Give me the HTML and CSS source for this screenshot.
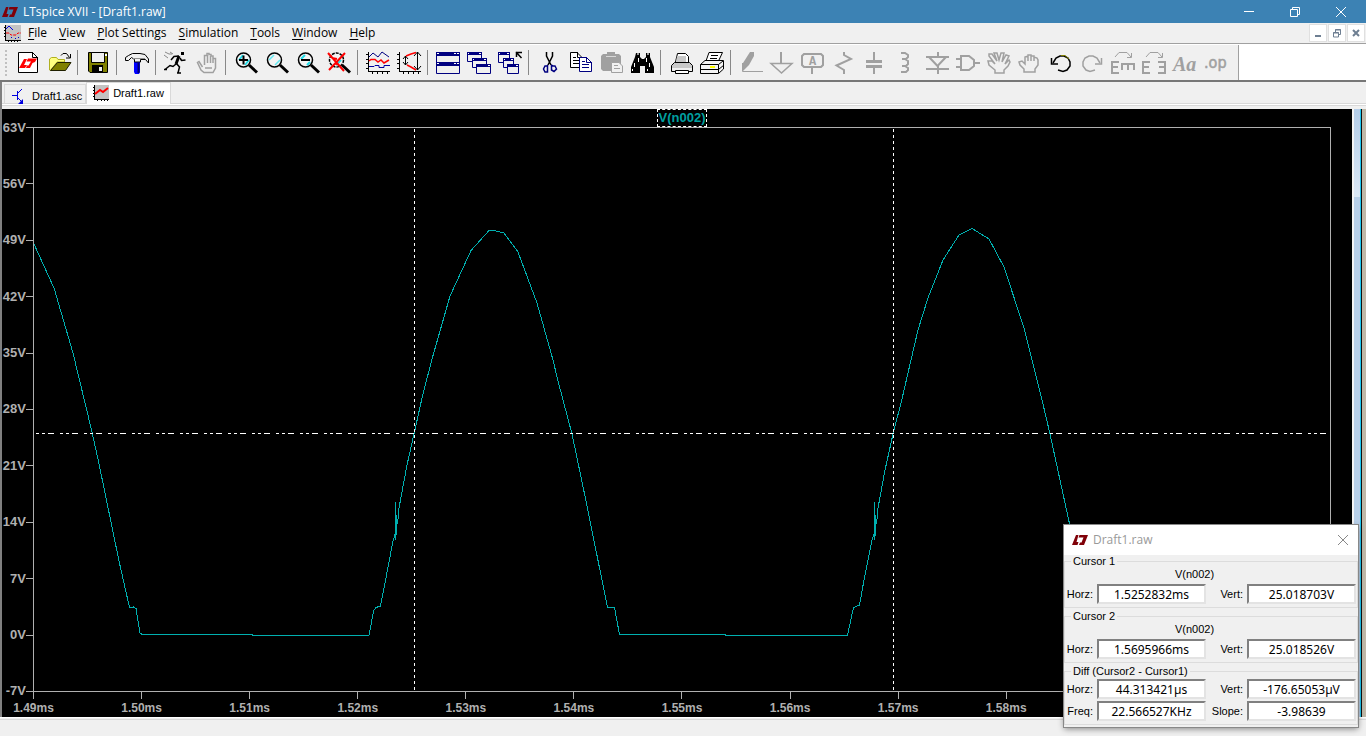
FILE: index.html
```html
<!DOCTYPE html>
<html lang="en">
<head>
<meta charset="utf-8">
<title>LTspice XVII - [Draft1.raw]</title>
<link rel="stylesheet" href="styles.css">
</head>
<body>
<header class="titlebar">
  <svg class="logo" viewBox="0 0 16 12"><path d="M4 1H6.500L4.500 8H6.500L5.500 11H0Z M7.500 1H16L15 3.500L12 11H7L8 8.500H9.500L11.500 3.500H6.500Z" fill="#800008"/></svg>
  <h1 class="title">LTspice XVII - [Draft1.raw]</h1>
  <div class="winbtns">
    <button aria-label="Minimize"><svg viewBox="0 0 12 12"><path d="M1 5.500H11"/></svg></button>
    <button aria-label="Restore"><svg viewBox="0 0 12 12"><path d="M1.500 3.500H8.500V10.500H1.500ZM3.500 3V1.500H10.500V8.500H9"/></svg></button>
    <button aria-label="Close"><svg viewBox="0 0 12 12"><path d="M1 1L11 11M11 1L1 11"/></svg></button>
  </div>
</header>

<nav class="menubar">
  <svg class="docicon" viewBox="0 0 17 17"><path d="M2 0H17V15H2Z" fill="#c3c3c3"/><path d="M1.500 0V16M1 15.500H17M0 2.500H2M0 5.500H2M0 8.500H2M0 11.500H2M4.500 15V17M7.500 15V17M10.500 15V17M13.500 15V17" stroke="#000" fill="none"/><path d="M2 4L5 1L9 5" stroke="#0000e0" fill="none"/><path d="M2 8H5L7 10H12L14 8H17" stroke="#f00" fill="none" stroke-dasharray="3 1"/><path d="M7 12h1v1h-1zM11 13h1v1h-1zM14 12h1v1h-1z" fill="#00c"/></svg>
  <button><u>F</u>ile</button>
  <button><u>V</u>iew</button>
  <button><u>P</u>lot Settings</button>
  <button><u>S</u>imulation</button>
  <button><u>T</u>ools</button>
  <button><u>W</u>indow</button>
  <button><u>H</u>elp</button>
  <div class="mdibtns">
    <button aria-label="Minimize document"><svg viewBox="0 0 12 12"><path d="M3 9H9" stroke-width="2"/></svg></button>
    <button aria-label="Restore document"><svg viewBox="0 0 12 12"><path d="M2.500 5.500H7.500V10H2.500ZM2 6H8M4.500 5V2.500H9.500V7.500H8M4 3H10"/></svg></button>
    <button aria-label="Close document"><svg viewBox="0 0 12 12"><path d="M3 3L9 9M9 3L3 9" stroke-width="2"/></svg></button>
  </div>
</nav>

<div class="toolrow">
<div class="toolbar" role="toolbar" aria-label="Main">
  <button aria-label="New schematic"><svg viewBox="0 0 24 24"><path d="M2.500 1.500H16.500L21.500 6.500V21.500H2.500Z" fill="#fff" stroke="#000"/><path d="M16.500 1V6.500H22" fill="none" stroke="#000"/><path d="M8 8H11L8 14H11L9 17H3L5 13.500ZM12 7.500H21L19 11L16.500 12L14 17H10L11 14.500H12.500L15 10.500H10.500Z" fill="#f00"/></svg></button>
  <button aria-label="Open"><svg viewBox="0 0 24 24"><path d="M2.500 19V8L4.500 6.500H9.500L11 8.500H17.500V11H10L3.500 19.500Z" fill="#ffff80" stroke="#b0b020"/><path d="M3.500 19.500L10.500 11.500H24L18.500 19.500Z" fill="#808000" stroke="#202000"/><path d="M14 4.500L16 2.500H19.500L22.500 6.500M23.500 3V7H19" fill="none" stroke="#000"/></svg></button>
  <i class="sep"></i>
  <button aria-label="Save"><svg viewBox="0 0 24 24"><path d="M2.500 1.500H21.500V21.500H4L2.500 20Z" fill="#808000" stroke="#000"/><path d="M5.500 1.500H18.500V11.500H5.500Z" fill="#efefef" stroke="#000"/><path d="M6 14H17V21H6Z" fill="#000"/><path d="M13 16H16V20H13Z" fill="#f0f0f0"/><path d="M19 3h2v2h-2z" fill="#fff"/></svg></button>
  <i class="sep"></i>
  <button aria-label="Control panel"><svg viewBox="0 0 24 24"><path d="M9 11H15V21L14 23H10L9 21Z" fill="#0000ff"/><path d="M13.500 12V22" stroke="#000070" stroke-width="2"/><path d="M.5 9.500V6.500L3.500 4.500L7.500 2.500H15L20 3.500L23.500 8V12L20.500 8.500H15.500V11H9.500V8.500L6.500 6.500L3.500 9.500Z" fill="#f0f0f0" stroke="#000"/><path d="M8 7.500H20" stroke="#909090"/></svg></button>
  <i class="sep"></i>
  <button aria-label="Run"><svg viewBox="0 0 24 24"><path d="M17 1H20V4H17Z"/><path d="M15 5L12 13" stroke="#000" stroke-width="3"/><path d="M15 5L10 5.500L7 9M16 7L17.500 9.500L21.500 9M12 13L9 15.500L6 14.500L1 18.500M12 12L15.500 16L14 22M0 18.500H3M13 22H17" fill="none" stroke="#000" stroke-width="1.500"/><path d="M1 1L5 3L8 3M0 4L4 7M6 1L9 3" stroke="#888" fill="none"/></svg></button>
  <button aria-label="Halt"><svg viewBox="0 0 24 24"><path d="M7.500 16L4 10.500L2.500 11.500L6 19L9 21.500H18L20.500 17V7.500H18V5H16V3.500H14V2.500H12V4.500H9.500V14M12.500 4V12M15.500 5V12M18 7V12M10 17H17" class="grey" stroke-width="1.500"/></svg></button>
  <i class="sep"></i>
  <button aria-label="Zoom in"><svg viewBox="0 0 24 24"><circle cx="9.500" cy="9" r="7" fill="#f4f4f4" stroke="#000" stroke-width="1.500"/><path d="M5 9L9 4M11 14L15 9" stroke="#20dce8" stroke-width="2"/><path d="M5 9H14M9.500 4.500V13.500" stroke="#000" stroke-width="2"/><path d="M15 14L23 21.500" stroke="#000" stroke-width="3"/></svg></button>
  <button aria-label="Pan"><svg viewBox="0 0 24 24"><circle cx="9.500" cy="9" r="7" fill="#f4f4f4" stroke="#000" stroke-width="1.500"/><path d="M4 9L9 4M10 14L15 9" stroke="#60e8f0" stroke-width="1.500"/><path d="M15 14L23 21.500" stroke="#000" stroke-width="3"/></svg></button>
  <button aria-label="Zoom out"><svg viewBox="0 0 24 24"><circle cx="9.500" cy="9" r="7" fill="#f4f4f4" stroke="#000" stroke-width="1.500"/><path d="M5 8L9 4M11 14L14 11" stroke="#20dce8" stroke-width="2"/><path d="M5 9H14" stroke="#000" stroke-width="2"/><path d="M15 14L23 21.500" stroke="#000" stroke-width="3"/></svg></button>
  <button aria-label="Zoom to fit"><svg viewBox="0 0 24 24"><circle cx="9.500" cy="9" r="7" fill="#f4f4f4" stroke="#000" stroke-width="1.500" stroke-dasharray="3 1"/><path d="M9 14L14 9" stroke="#20dce8" stroke-width="2"/><path d="M15 14L23 21.500" stroke="#000" stroke-width="3"/><path d="M1 2L17 20M18 2L2 19M5 7L10 8M8 12L12 14" stroke="#f00" stroke-width="2"/></svg></button>
  <i class="sep"></i>
  <button aria-label="Autorange"><svg viewBox="0 0 24 24"><path d="M2.500 1V21M2 20.500H24M0 3.500H3M0 8.500H3M0 12.500H3M0 17.500H3M6.500 20V23M11.500 20V23M16.500 20V23M21.500 20V23" stroke="#000" fill="none"/><path d="M3 6L7 2L12 6L16 1L23 6" stroke="#000080" fill="none"/><path d="M3 10L5 8.500H9L12 11L15 9L18 12L23 9" stroke="#f00" fill="none" stroke-width="1.500"/><path d="M3 15.500H8L9 14.500H13V16.500H18V14.500H24" stroke="#0000a0" fill="none"/></svg></button>
  <button aria-label="Fit vertical"><svg viewBox="0 0 24 24"><path d="M2.500 1V21M2 20.500H24M0 3.500H3M0 8.500H3M0 12.500H3M0 17.500H3M6.500 20V23M11.500 20V23M16.500 20V23M21.500 20V23M8.500 5V14M6 8L8.500 5L11 8M6 11L8.500 14L11 11M20.500 1V19M17 5L20.500 1L24 5M17 15L20.500 19L24 15" stroke="#000" fill="none"/><path d="M19 1.500L14 3L9 5M10 14L14 16L19 19" stroke="#f00" fill="none" stroke-width="1.500"/></svg></button>
  <i class="sep"></i>
  <button aria-label="Tile windows"><svg viewBox="0 0 24 24"><path d="M.5 1.500H23.500V11.500H.5ZM.5 11.500H23.500V22.500H.5Z" fill="#f0f0f0" stroke="#000080"/><path d="M0 1H24V5H0ZM0 11H24V15H0Z" fill="#000080"/><path d="M1 2h2v1h-2zM18 2h2v1h-2zM21 2h2v1h-2zM1 12h2v1h-2zM18 12h2v1h-2zM21 12h2v1h-2z" fill="#fff"/></svg></button>
  <button aria-label="Cascade windows"><svg viewBox="0 0 24 24"><g fill="#f0f0f0" stroke="#000080"><path d="M.5 1.500H14.500V10.500H.5Z"/><path d="M5.500 7.500H19.500V16.500H5.500Z"/><path d="M9.500 13.500H23.500V22.500H9.500Z"/></g><path d="M0 1H15V4H0ZM5 7H20V10H5ZM9 13H24V16H9Z" fill="#000080"/><path d="M1 2h1v1h-1zM12 2h2v1h-2zM6 8h1v1h-1zM17 8h2v1h-2zM21 14h2v1h-2z" fill="#fff"/></svg></button>
  <button aria-label="Close windows"><svg viewBox="0 0 24 24"><g fill="#f0f0f0" stroke="#000080"><path d="M.5 1.500H11.500V11.500H.5Z"/><path d="M5.500 7.500H15.500V16.500H5.500Z"/><path d="M9.500 13.500H20.500V22.500H9.500Z"/></g><path d="M0 1H12V4H0ZM5 7H16V10H5ZM9 13H21V16H9Z" fill="#000080"/><path d="M1 2h1v1h-1zM9 2h2v1h-2zM6 8h1v1h-1zM13 8h2v1h-2zM18 14h2v1h-2z" fill="#fff"/><path d="M18.500 6V1.500H24M18 1L23.500 7" fill="none" stroke="#000" stroke-width="1.500"/></svg></button>
  <i class="sep"></i>
  <button aria-label="Cut"><svg viewBox="0 0 24 24"><path d="M9.500 1V5L14 14M15.500 1V5L11 14" stroke="#000" stroke-width="1.500" fill="none"/><path d="M11 14L10 15H8L6.500 18L8 21H10.500V15M14 14L16 15H18L19.500 18L17 20.500L14.500 19V14" stroke="#000080" stroke-width="1.500" fill="none"/></svg></button>
  <button aria-label="Copy"><svg viewBox="0 0 24 24"><path d="M2.500 1.500H9L14.500 7V16.500H2.500Z" fill="#fff" stroke="#000"/><path d="M9.500 1V6.500H14M5 6.500H8M5 9.500H11M5 12.500H11" stroke="#000" fill="none"/><path d="M11.500 6.500H18.500L23.500 11.500V20.500H11.500Z" fill="#fff" stroke="#000080"/><path d="M18.500 6V11.500H24M14 10.500H17M14 13.500H21M14 16.500H21" stroke="#000080" fill="none"/></svg></button>
  <button aria-label="Paste" disabled><svg viewBox="0 0 24 24"><path d="M4 3H8V1H16V3H20L22 5V20H4L2 18V5Z" fill="#a0a0a0"/><path d="M7 5.500H17" stroke="#d8d8d8"/><path d="M12.500 11.500H20L23.500 15V21.500H12.500Z" fill="#f0f0f0" stroke="#a0a0a0"/><path d="M15 14.500H19M15 17.500H21" stroke="#a0a0a0"/></svg></button>
  <button aria-label="Find"><svg viewBox="0 0 24 24"><path d="M6 2H10V6L12 8H14L16 6V2H20V6L24 16V22H15V15H10V22H1V16L5 6Z" fill="#000"/><path d="M7 3H9M17 3H19" stroke="#999" stroke-width="2"/><path d="M8.500 7V11M4.500 12V16M16.500 7V11M19.500 12V16M2.500 18V20M17.500 18V20" stroke="#fff"/></svg></button>
  <i class="sep"></i>
  <button aria-label="Print"><svg viewBox="0 0 24 24"><path d="M6 13L8.500 2.500H16.500L19.500 5.500V13" fill="#fff" stroke="#000"/><path d="M8 5H17V12H7Z" fill="#c8c8c8"/><path d="M5.500 11.500H20.500L23.500 14.500V20.500H2.500V14.500Z" fill="#c8c8c8" stroke="#000"/><path d="M3 17H23V20H3Z" fill="#efefef"/><path d="M6.500 19.500H19.500V22.500H6.500Z" fill="#fff" stroke="#000"/></svg></button>
  <button aria-label="Print setup"><svg viewBox="0 0 24 24"><path d="M6 10L9 1.500H22.500L18.500 10" fill="#fff" stroke="#000"/><path d="M11 4.500H18M10 7.500H17" stroke="#000"/><path d="M.5 13.500L5 9.500H23.500V18L18.500 22.500H.5Z" fill="#f4f4f4" stroke="#000"/><path d="M.5 13.500H18.500V22M18.500 13.500L23 10M0 18.500H18.500L24 14" fill="none" stroke="#000"/><path d="M10 15H15V17H10Z" fill="#ff0"/></svg></button>
  <i class="sep"></i>
  <button aria-label="Wire" disabled><svg viewBox="0 0 24 24"><path d="M11 1H15V5L10 14L4 20V12Z" fill="#a0a0a0"/><path d="M3.500 12V20.500H24" class="grey"/></svg></button>
  <button aria-label="Ground" disabled><svg viewBox="0 0 24 24"><path d="M11 1V12" class="grey" stroke-width="2"/><path d="M1 12.500H22L11.500 22Z" class="grey" stroke-width="1.500"/></svg></button>
  <button aria-label="Label net" disabled><svg viewBox="0 0 24 24"><path d="M3 3H20L22 5V14L20 16H3L1 14V5ZM11 16V23" class="grey" stroke-width="2"/><text x="11.500" y="14" class="mono">A</text></svg></button>
  <button aria-label="Resistor" disabled><svg viewBox="0 0 24 24"><path d="M12 1V4L19 8L4.500 14.500L12 19V23" class="grey" stroke-width="2"/></svg></button>
  <button aria-label="Capacitor" disabled><svg viewBox="0 0 24 24"><path d="M11 1V9M11 16V23" class="grey" stroke-width="2"/><path d="M3 10.500H19M3 15.500H19" class="grey" stroke-width="3"/></svg></button>
  <button aria-label="Inductor" disabled><svg viewBox="0 0 24 24"><path d="M7 2H11L14 4V6L12 8H8M11 8L14 10V13L12 15H8M11 15L14 17V19L12 21H7" class="grey" stroke-width="2"/></svg></button>
  <button aria-label="Diode" disabled><svg viewBox="0 0 24 24"><path d="M1 6H24M4 6L12.500 15L21 6M1 18H24M13 1V6M13 15V23" class="grey" stroke-width="2"/></svg></button>
  <button aria-label="Component" disabled><svg viewBox="0 0 24 24"><path d="M5 5H13L18 9V15L13 19H5ZM0 8H5M0 16H5M18 12H24" class="grey" stroke-width="2"/></svg></button>
  <button aria-label="Move" disabled><svg viewBox="0 0 24 24"><path d="M8 22V19L2 14L1 10H5L8 13L2 5V3H5L10 10L7 2H10L12 9L14 2H17L15 11L19 4L22 5L18 13L22 9L23 11L21 15L17 19V22Z" class="grey" stroke-width="1.500"/></svg></button>
  <button aria-label="Drag" disabled><svg viewBox="0 0 24 24"><path d="M6 21V18L2 14L1 11L4 10L7 13V6L10 5V10V4H13V10V5H16V10V6L19 7L20 9V14L17 18V21Z" class="grey" stroke-width="1.500"/></svg></button>
  <button aria-label="Undo"><svg viewBox="0 0 24 24"><path d="M4 12L7 7L11 5H15L19 7L21 11V15L18 19L14 20.500L9 19" fill="none" stroke="#000" stroke-width="1.500"/><path d="M2.500 7V13H9" fill="none" stroke="#000" stroke-width="1.500"/><path d="M12 4.500H16L20 8" fill="none" stroke="#808000"/></svg></button>
  <button aria-label="Redo" disabled><svg viewBox="0 0 24 24"><path d="M20 12L17 7L13 5H9L5 7L3 11V15L6 19L10 20.500L15 19" class="grey" stroke-width="1.500"/><path d="M21.500 7V13H15" class="grey" stroke-width="1.500"/></svg></button>
  <button aria-label="Rotate" disabled><svg viewBox="0 0 24 24"><path d="M8 11H1V22H8M1 16H7M11 19V13H23V19M17 13V19" class="grey" stroke-width="2"/><path d="M4 6L8 1.500H16L20 6M20.500 2V6.500H16" class="grey"/></svg></button>
  <button aria-label="Mirror" disabled><svg viewBox="0 0 24 24"><path d="M8 11H1V22H8M1 16H7M16 11H23V22H16M23 16H17" class="grey" stroke-width="2"/><path d="M4 6L8 1.500H16L20 6M20.500 2V6.500H16" class="grey"/></svg></button>
  <button aria-label="Text" disabled><svg viewBox="0 0 24 24"><text x="0" y="20" class="serif">Aa</text></svg></button>
  <button aria-label="SPICE directive" disabled><svg viewBox="0 0 24 24"><text x="0" y="17" class="op">.op</text></svg></button>
</div>
</div>

<main class="workspace">
  <div class="tabs" role="tablist">
    <button class="tab" role="tab"><svg viewBox="0 0 16 16"><path d="M5.500 3V12M0 7.500H5M5 6L10 1M5 9L10 14" stroke="#0000e0" fill="none"/><path d="M11 16V11L6 16Z" fill="#0000e0"/></svg>Draft1.asc</button>
    <button class="tab active" role="tab" aria-selected="true"><svg viewBox="0 0 16 16"><path d="M2 0H16V14H2Z" fill="#c3c3c3"/><path d="M1.500 0V15M1 14.500H16M0 2.500H2M0 5.500H2M0 8.500H2M0 11.500H2M4.500 14V16M8.500 14V16M11.500 14V16M14.500 14V16" stroke="#000" fill="none"/><path d="M2 9L7 5L10 7L15 3" stroke="#f00" stroke-width="2" fill="none"/></svg>Draft1.raw</button>
  </div>
  <div class="view">
    <div class="scope">
      <div class="legend"><button>V(n002)</button></div>
      <div class="yaxis"><span>63V</span><span>56V</span><span>49V</span><span>42V</span><span>35V</span><span>28V</span><span>21V</span><span>14V</span><span>7V</span><span>0V</span><span>-7V</span></div>
      <div class="frame">
        <svg viewBox="34 128 1296 563" preserveAspectRatio="none">
          <path class="trace" d="M34 244L54 288L73 353L92 432L98 459L119 561L129.500 607.500L133.500 607L136 608.500L140 633L142 634.500H252V635.500H369L371.500 622L373.500 611L376 607.500L380.500 606L383 593L385 583L393 541L395.500 533V502V540V517L396.500 535V515L397.500 524L399 508L407 465L414 434L422 398L432 359L450 296L471 250.500L489 230.500H494L504 233L518 252L537 303L553 360L558 381L572 434L586 501L607.500 607.500H614.500L619.500 634.500H725V635.500H847.500L853.500 607.500L859.500 605L864 580L872 540L874.500 533V502V540V517L875.500 536V515L876.500 524L878 508L885 470L893 434L902 399L911 360L918 330L928 298L943 260L959 235L972 228.500L989 239L1004 267L1024 328L1032 360L1042 400L1050 434L1070 526L1087 607"/>
          <path class="cursor" d="M414.500 129V691M893.500 129V691" stroke-dasharray="3 3"/>
          <path class="cursor" d="M36 433.500H1328" stroke-dasharray="3 3 3 3 6 6"/>
        </svg>
      </div>
      <div class="xaxis"><span>1.49ms</span><span>1.50ms</span><span>1.51ms</span><span>1.52ms</span><span>1.53ms</span><span>1.54ms</span><span>1.55ms</span><span>1.56ms</span><span>1.57ms</span><span>1.58ms</span><span></span><span></span><span></span></div>
    </div>
    <div class="edge"></div>
  </div>
</main>
<footer class="status"></footer>

<section class="dialog" aria-label="Draft1.raw">
  <header>
    <svg class="logo" viewBox="0 0 16 12"><path d="M4 1H6.500L4.500 8H6.500L5.500 11H0Z M7.500 1H16L15 3.500L12 11H7L8 8.500H9.500L11.500 3.500H6.500Z" fill="#800008"/></svg>
    <h2>Draft1.raw</h2>
    <button aria-label="Close"><svg viewBox="0 0 12 12"><path d="M1 1L11 11M11 1L1 11"/></svg></button>
  </header>
  <fieldset>
    <legend>Cursor 1</legend>
    <p>V(n002)</p>
    <div class="row"><label for="h1">Horz:</label><input id="h1" value="1.5252832ms" readonly><label for="v1">Vert:</label><input id="v1" value="25.018703V" readonly></div>
  </fieldset>
  <fieldset>
    <legend>Cursor 2</legend>
    <p>V(n002)</p>
    <div class="row"><label for="h2">Horz:</label><input id="h2" value="1.5695966ms" readonly><label for="v2">Vert:</label><input id="v2" value="25.018526V" readonly></div>
  </fieldset>
  <fieldset>
    <legend>Diff (Cursor2 - Cursor1)</legend>
    <div class="row"><label for="h3">Horz:</label><input id="h3" value="44.313421µs" readonly><label for="v3">Vert:</label><input id="v3" value="-176.65053µV" readonly></div>
    <div class="row"><label for="f3">Freq:</label><input id="f3" value="22.566527KHz" readonly><label for="s3">Slope:</label><input id="s3" value="-3.98639" readonly></div>
  </fieldset>
</section>
</body>
</html>
```

FILE: styles.css
```css
* { box-sizing: border-box; }
body {
  margin: 0;
  height: 100vh;
  display: flex;
  flex-direction: column;
  position: relative;
  overflow: hidden;
  background: #f0f0f0;
  color: #000;
  font: 12px/16px "Open Sans", "Noto Sans", sans-serif;
}
button {
  margin: 0;
  padding: 0;
  border: 0;
  background: none;
  color: inherit;
  font: inherit;
}
svg { display: block; overflow: visible; }
.logo { width: 16px; height: 12px; }

.titlebar {
  display: flex;
  align-items: center;
  height: 23px;
  padding-left: 2px;
  background: #3c82b4;
  color: #fff;
}
.title {
  margin: 0 0 0 5px;
  font-size: 12px;
  font-weight: 400;
}
.winbtns { display: flex; margin-left: auto; padding-right: 2px; }
.winbtns button {
  width: 46px;
  height: 20px;
  display: flex;
  align-items: center;
  justify-content: center;
}
.winbtns svg { width: 12px; height: 12px; fill: none; stroke: #fff; }

.menubar {
  display: flex;
  align-items: center;
  height: 21px;
  padding-left: 4px;
  border-bottom: 1px solid #a0a0a0;
}
.docicon { width: 17px; height: 17px; margin-right: 1px; }
.menubar > button { padding: 0 6px; }
.menubar u { text-underline-offset: 2px; }
.mdibtns { display: flex; gap: 1px; margin-left: auto; padding-right: 1px; }
.mdibtns button {
  width: 18px;
  height: 18px;
  display: flex;
  align-items: center;
  justify-content: center;
  background: #fff;
  border: 1px solid #e0e0e0;
}
.mdibtns svg { width: 12px; height: 12px; fill: none; stroke: #6e7f92; }

.toolrow {
  display: flex;
  height: 38px;
  background: #fff;
  border-top: 1px solid #fff;
  border-bottom: 2px solid #777;
}
.toolbar {
  display: flex;
  align-items: center;
  padding: 0 7px 0 12px;
  background: #f0f0f0;
  border-right: 1px solid #a0a0a0;
  position: relative;
}
.toolbar::before {
  content: "";
  position: absolute;
  left: 5px;
  top: 5px;
  height: 26px;
  border-left: 2px dotted #c0c0c0;
}
.toolbar button { width: 31px; height: 30px; padding-left: 4px; }
.toolbar svg { width: 24px; height: 24px; }
.sep { width: 8px; height: 25px; background: linear-gradient(#888, #888) 3px 0 / 1px 25px no-repeat; }
.grey { fill: none; stroke: #a0a0a0; }
.toolbar text { fill: #a0a0a0; }
.mono { font: 700 12px "Liberation Mono", monospace; text-anchor: middle; }
.serif { font: italic 700 20px "Liberation Serif", serif; }
.op { font: 16px "DejaVu Sans Condensed", "DejaVu Sans", sans-serif; stroke: #a0a0a0; stroke-width: 0.5; }

.workspace {
  flex: 1;
  min-height: 0;
  display: flex;
  flex-direction: column;
  border-left: 2px solid #808080;
}
.tabs {
  display: flex;
  align-items: flex-end;
  height: 27px;
  padding: 0 0 5px 2px;
  background: linear-gradient(#d9d9d9, #d9d9d9) 0 21px / 100% 1px no-repeat, linear-gradient(#fff, #fff) 0 22px / 100% 1px no-repeat, linear-gradient(#d9d9d9, #d9d9d9) 0 23px / 100% 1px no-repeat;
}
.tab {
  display: flex;
  align-items: center;
  gap: 4px;
  height: 20px;
  padding: 2px 3px 0 7px;
  border: 1px solid #d9d9d9;
  border-bottom: 0;
  font: 11px/14px "Liberation Sans", Arial, sans-serif;
}
.tab svg { width: 16px; height: 16px; }
.tab.active { height: 22px; padding: 0 6px 1px 6px; background: #fff; }

.view { flex: 1; min-height: 0; display: flex; }
.scope {
  flex: 1;
  min-width: 0;
  display: grid;
  grid-template: 18px minmax(0, 1fr) 25px / 31px minmax(0, 1fr) 21px;
  background: #000;
  color: #b0b0b0;
  font: 700 12px/14px "Liberation Sans", Arial, sans-serif;
}
.legend { grid-area: 1 / 2; display: flex; justify-content: center; }
.legend button { height: 18px; padding: 0 1px; border: 1px dashed #fff; color: #00a0a0; font-size: 13px; }
.frame { grid-area: 2 / 2; border: 1px solid #b0b0b0; min-height: 0; }
.frame svg { width: 100%; height: 100%; overflow: hidden; shape-rendering: crispEdges; }
.frame path { fill: none; vector-effect: non-scaling-stroke; }
.trace { stroke: #00b0b0; }
.cursor { stroke: #fff; }
.yaxis {
  grid-area: 2 / 1;
  display: flex;
  flex-direction: column;
  justify-content: space-between;
  font-size: 13px;
}
.yaxis span {
  height: 1px;
  display: flex;
  align-items: center;
  justify-content: flex-end;
}
.yaxis span::after { content: ""; width: 7px; height: 1px; background: #b0b0b0; }
.xaxis { grid-area: 3 / 2; display: flex; justify-content: space-between; }
.xaxis span {
  width: 1px;
  display: flex;
  flex-direction: column;
  align-items: center;
  gap: 2px;
}
.xaxis span::before { content: ""; width: 1px; height: 7px; background: #b0b0b0; }
.edge {
  width: 14px;
  border-left: 2px solid #f4f4f4;
  background: linear-gradient(90deg, transparent 6px, #20c8f0 6px 7px, #101010 7px 8px, #c0b8a8 8px), linear-gradient(#b4cde8, #dce8f5 88px, #b8cfe8 88px);
}
.status { height: 19px; border-top: 1px solid #fff; box-shadow: inset 0 1px #f0f0f0, inset 0 2px #d9d9d9; }

.dialog {
  position: absolute;
  right: 8px;
  bottom: 9px;
  width: 294px;
  background: #f0f0f0;
  box-shadow: 0 0 0 1px #888, 0 2px 6px rgba(0, 0, 0, 0.45);
  font: 11px/13px "Liberation Sans", Arial, sans-serif;
}
.dialog header {
  display: flex;
  align-items: center;
  height: 30px;
  padding: 0 9px 0 8px;
  background: #fff;
  color: #999;
}
.dialog h2 { flex: 1; margin: 0 0 0 5px; font: 12px/16px "Open Sans", sans-serif; }
.dialog header svg { height: 12px; }
.dialog header button svg { width: 12px; fill: none; stroke: #888; }
fieldset {
  min-width: 0;
  margin: 0 0 2px;
  padding: 0 1px 3px 0;
  border: 1px solid #dcdcdc;
}
legend { margin-left: 6px; padding: 0 2px; }
.dialog p { margin: 0 0 2px; padding-right: 32px; text-align: center; }
.row {
  display: grid;
  grid-template-columns: 28px 1fr 33px 1fr;
  gap: 4px;
  align-items: center;
  padding-top: 1px;
}
.row + .row { padding-top: 2px; }
.row label { text-align: right; white-space: nowrap; }
.row input {
  width: 100%;
  min-width: 0;
  height: 20px;
  padding: 0;
  border: 2px solid;
  border-color: #808080 #e3e3e3 #e3e3e3 #808080;
  background: #fff;
  font: 12px/16px "Noto Sans", sans-serif;
  text-align: center;
}
```
